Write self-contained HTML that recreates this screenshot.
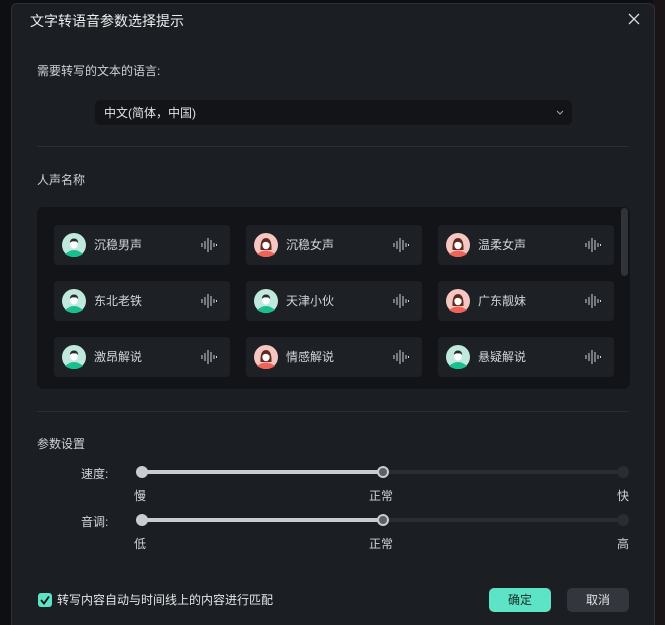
<!DOCTYPE html>
<html><head><meta charset="utf-8"><style>
*{margin:0;padding:0;box-sizing:border-box}
html{width:665px;height:625px;overflow:hidden}
body{width:665px;height:625px;background:#0e0f12;position:relative;overflow:hidden;font-family:"Liberation Sans","Noto Sans CJK SC",sans-serif;color:#d8dadd;font-size:12px}
.bgr{position:absolute;right:0;top:0;width:12px;height:625px;background:#1a1416}
.dlg{position:absolute;left:11px;top:3px;width:644px;height:622px;background:#1b1e22;border:1px solid #2c3036;border-bottom:none;border-radius:6px 6px 0 0}
.abs{position:absolute}
.title{left:18px;top:7px;font-size:14px;color:#eceef0}
.close{right:14px;top:9px}
.lbl{font-size:12px;color:#d0d3d6}
.sel{left:83px;top:96px;width:477px;height:25px;background:#121417;border-radius:5px;padding:4px 9px;font-size:12px;color:#e0e2e4}
.hr{left:25px;width:592px;height:1px;background:#2a2e33}
.panel{left:25px;top:203px;width:593px;height:182px;background:#121417;border-radius:7px}
.sb{left:609px;top:204px;width:7px;height:68px;background:#30343a;border-radius:4px}
.card{position:absolute;width:176px;height:40px;background:#1d2024;border-radius:4px}
.card .av{position:absolute;left:8px;top:8px;width:24px;height:24px}
.card .nm{position:absolute;left:40px;top:11px;font-size:12px;color:#d2d6da}
.card .wv{position:absolute;left:147px;top:13px}
.track{height:4px;border-radius:2px;background:#2a2d31}
.fill{height:4px;border-radius:2px;background:#c9ccd0}
.knob{width:12px;height:12px;border-radius:50%;background:#c9ccd0}
.knobm{width:12px;height:12px;border-radius:50%;background:#5d6167;border:2px solid #c9ccd0}
.knobe{width:12px;height:12px;border-radius:50%;background:#2a2d31}
.tk{font-size:12px;color:#d0d3d6}
.btn{height:24px;border-radius:5px;font-size:12px;text-align:center;line-height:24px}
</style></head><body>
<div class="bgr"></div>
<div class="dlg">
<div class="abs title">文字转语音参数选择提示</div>
<svg class="abs close" width="12" height="12" viewBox="0 0 12 12"><path d="M1 1L11 11M11 1L1 11" stroke="#e0e2e4" stroke-width="1.3"/></svg>
<div class="abs lbl" style="left:25px;top:58px">需要转写的文本的语言:</div>
<div class="abs sel">中文(简体，中国)<svg style="position:absolute;right:8px;top:10px" width="8" height="5" viewBox="0 0 8 5"><path d="M1 1L4 4L7 1" stroke="#aaa" fill="none"/></svg></div>
<div class="abs hr" style="top:142px"></div>
<div class="abs lbl" style="left:25px;top:167px">人声名称</div>
<div class="abs panel"></div>
<div class="abs sb"></div>
<div id="cards"></div>
<div class="abs hr" style="top:407px"></div>
<div class="abs lbl" style="left:25px;top:431px">参数设置</div>

<div class="abs lbl" style="left:69px;top:461px">速度:</div>
<div class="abs track" style="left:130px;top:466px;width:482px"></div>
<div class="abs fill" style="left:130px;top:466px;width:242px"></div>
<div class="abs knob" style="left:124px;top:462px"></div>
<div class="abs knobm" style="left:365px;top:462px"></div>
<div class="abs knobe" style="left:605px;top:462px"></div>
<div class="abs tk" style="left:122px;top:483px">慢</div>
<div class="abs tk" style="left:357px;top:483px">正常</div>
<div class="abs tk" style="left:605px;top:483px">快</div>

<div class="abs lbl" style="left:69px;top:509px">音调:</div>
<div class="abs track" style="left:130px;top:514px;width:482px"></div>
<div class="abs fill" style="left:130px;top:514px;width:242px"></div>
<div class="abs knob" style="left:124px;top:510px"></div>
<div class="abs knobm" style="left:365px;top:510px"></div>
<div class="abs knobe" style="left:605px;top:510px"></div>
<div class="abs tk" style="left:122px;top:531px">低</div>
<div class="abs tk" style="left:357px;top:531px">正常</div>
<div class="abs tk" style="left:605px;top:531px">高</div>

<svg class="abs" style="left:26px;top:589px" width="14" height="14" viewBox="0 0 14 14"><rect width="14" height="14" rx="3" fill="#5de3c6"/><path d="M3 7L6 10.5L11 3.5" stroke="#111" stroke-width="1.8" fill="none"/></svg>
<div class="abs lbl" style="left:45px;top:587px;color:#e4e6e8">转写内容自动与时间线上的内容进行匹配</div>
<div class="abs btn" style="left:477px;top:584px;width:62px;background:#5de3c6;color:#1a2a26">确定</div>
<div class="abs btn" style="left:555px;top:584px;width:62px;background:#33373d;color:#e0e2e4">取消</div>
</div>
<script>
var names=[["沉稳男声","m"],["沉稳女声","f"],["温柔女声","f"],["东北老铁","m"],["天津小伙","m"],["广东靓妹","f"],["激昂解说","m"],["情感解说","f"],["悬疑解说","m"]];
var h="";
names.forEach(function(n,i){
 var x=54+(i%3)*192-12, y=224+Math.floor(i/3)*56-3;
 var av = n[1]=="m"
 ? '<svg class="av" viewBox="0 0 24 24"><circle cx="12" cy="12" r="12" fill="#bfe9dc"/><path d="M3 21Q12 13 21 21Q17 24 12 24Q7 24 3 21Z" fill="#1bbf8f"/><ellipse cx="12" cy="11" rx="4" ry="4.5" fill="#fff"/><path d="M7.8 10Q8 5.5 12 5.5Q16 5.5 16.2 10Q14 7.5 12 8.5Q10 7.5 7.8 10Z" fill="#2a2a2a"/></svg>'
 : '<svg class="av" viewBox="0 0 24 24"><circle cx="12" cy="12" r="12" fill="#f7c6c2"/><path d="M6.5 17Q6 5 12 5Q18 5 17.5 17Z" fill="#5a2d1e"/><path d="M3 21Q12 14 21 21Q17 24 12 24Q7 24 3 21Z" fill="#f0625a"/><ellipse cx="12" cy="12" rx="3.7" ry="4.3" fill="#fff"/><path d="M8.3 11Q9 7 12 7Q15 7 15.7 11Q13 8.5 12 9Q10 8.5 8.3 11Z" fill="#5a2d1e"/></svg>';
 h+='<div class="card" style="left:'+x+'px;top:'+y+'px">'+av+'<div class="nm">'+n[0]+'</div><svg class="wv" width="16" height="14" viewBox="0 0 16 14"><path d="M1 5V9M4 3V11M7 0V14M10 2V12M13 5V9M15.5 6V8" stroke="#cfd2d6" stroke-width="1"/></svg></div>';
});
document.getElementById("cards").innerHTML=h;
</script>
</body></html>
